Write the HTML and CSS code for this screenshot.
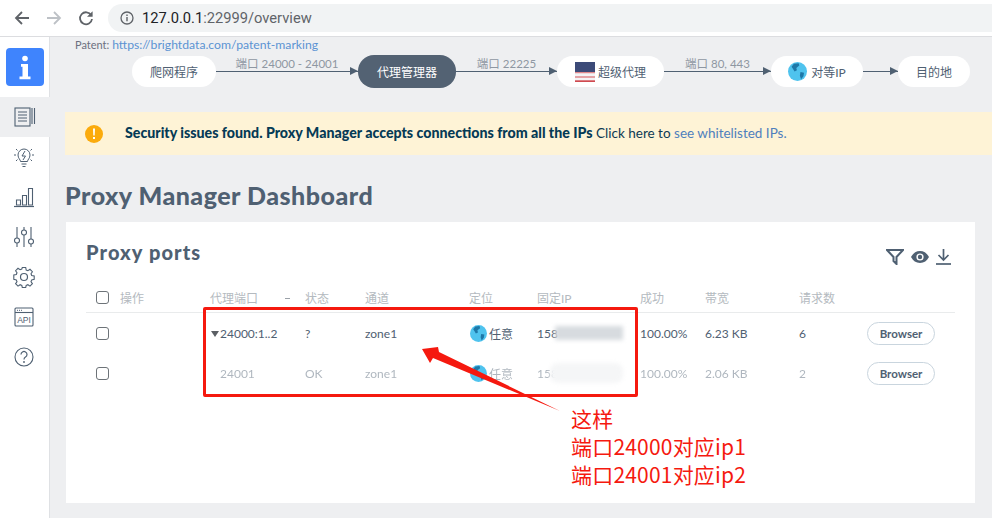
FILE: index.html
```html
<!DOCTYPE html>
<html lang="zh">
<head>
<meta charset="utf-8">
<title>Proxy Manager</title>
<link rel="stylesheet" href="styles.css">
</head>
<body>
<header class="topbar">
  <svg class="nav-icon" viewBox="0 0 16 16"><path d="M15 8H2.500M8 2 2 8l6 6" fill="none" stroke="#5f6368" stroke-width="1.800"/></svg>
  <svg class="nav-icon" viewBox="0 0 16 16"><path d="M1 8h12.500M8 2l6 6-6 6" fill="none" stroke="#bdc1c6" stroke-width="1.800"/></svg>
  <svg class="nav-icon" viewBox="0 0 16 16"><path d="M13.200 5.200A6 6 0 1 0 14 9" fill="none" stroke="#5f6368" stroke-width="1.800"/><path d="M14.600 1.200v5.600H9z" fill="#5f6368"/></svg>
  <div class="url">
    <svg class="info" viewBox="0 0 14 14"><circle cx="7" cy="7" r="6" fill="none" stroke="#5f6368" stroke-width="1.300"/><path d="M6.300 6h1.400v4.200H6.300zM6.300 3.600h1.400V5H6.300z" fill="#5f6368"/></svg>
    <span class="host">127.0.0.1</span><span class="path">:22999/overview</span>
  </div>
</header>
<div class="app">
  <nav class="sidebar">
    <div class="logo-wrap">
      <div class="logo">
        <svg viewBox="0 0 38 38"><circle cx="19" cy="10.500" r="2.800" fill="#fff"/><path d="M15 16h7v12.500h2.500v2.700H13.500v-2.700H16.500v-9.800H15z" fill="#fff"/></svg>
      </div>
    </div>
    <a class="side-item active">
      <svg viewBox="0 0 22 22"><rect x="1" y="2" width="15" height="18" fill="none" stroke="#4f6072" stroke-width="1.100"/><path d="M4 6h9M4 9h9M4 12h9M4 15h9M18 2v16M20.500 2v16" stroke="#4f6072" stroke-width="1.100" fill="none"/></svg>
    </a>
    <a class="side-item">
      <svg viewBox="0 0 22 22"><path d="M7.500 15.500c0-2-2.500-3-2.500-6.500a6 6 0 0 1 12 0c0 3.500-2.500 4.500-2.500 6.500zM8.500 18h5M9.500 20.500h3" fill="none" stroke="#4f6072" stroke-width="1"/><path d="M12 5 9 10h3.500L10 14" fill="none" stroke="#4f6072" stroke-width="1"/><path d="M1 9h2M19 9h2M3 3l1.500 1.500M19 3l-1.500 1.500M3 15l1.500-1.500M19 15l-1.500-1.500" stroke="#4f6072" stroke-width="1"/></svg>
    </a>
    <a class="side-item">
      <svg viewBox="0 0 22 22"><path d="M1 20.500h20" stroke="#4f6072" stroke-width="1.200"/><path d="M3.500 14h4v5h-4zM9.500 9.500h4V19h-4zM15.500 2.500h4V19h-4z" fill="none" stroke="#4f6072" stroke-width="1.100"/></svg>
    </a>
    <a class="side-item">
      <svg viewBox="0 0 22 22"><path d="M4 1v11M4 17v4M11 1v3M11 9v12M18 1v12M18 18v3" stroke="#4f6072" stroke-width="1.100"/><circle cx="4" cy="14.500" r="2.500" fill="none" stroke="#4f6072" stroke-width="1.100"/><circle cx="11" cy="6.500" r="2.500" fill="none" stroke="#4f6072" stroke-width="1.100"/><circle cx="18" cy="15.500" r="2.500" fill="none" stroke="#4f6072" stroke-width="1.100"/></svg>
    </a>
    <a class="side-item">
      <svg viewBox="0 0 22 22"><path d="M9.300 1.500h3.400l.5 2.500 1.700.7 2.100-1.400 2.400 2.400-1.400 2.100.7 1.700 2.500.5v3.400l-2.500.5-.7 1.700 1.400 2.100-2.400 2.400-2.100-1.400-1.700.7-.5 2.100H9.300l-.5-2.100-1.700-.7-2.100 1.400-2.400-2.400 1.400-2.100-.7-1.700-2.500-.5V9l2.500-.5.7-1.700-1.400-2.100 2.400-2.400 2.100 1.400 1.700-.7z" fill="none" stroke="#4f6072" stroke-width="1.100"/><circle cx="11" cy="11" r="3.500" fill="none" stroke="#4f6072" stroke-width="1.200"/></svg>
    </a>
    <a class="side-item">
      <svg viewBox="0 0 22 22"><rect x="2" y="2" width="18" height="18" rx="1" fill="none" stroke="#4f6072" stroke-width="1.100"/><path d="M2 6.500h18" stroke="#4f6072" stroke-width="1.100"/><path d="M4 4.300h1M6 4.300h1M8 4.300h1" stroke="#4f6072" stroke-width="1"/><text x="11" y="16.800" class="api-text" text-anchor="middle">API</text></svg>
    </a>
    <a class="side-item">
      <svg viewBox="0 0 22 22"><circle cx="11" cy="11" r="9" fill="none" stroke="#4f6072" stroke-width="1.100"/><path d="M8 8.500a3 3 0 1 1 4.500 2.600c-1 .6-1.500 1.100-1.500 2.400" fill="none" stroke="#4f6072" stroke-width="1.200"/><circle cx="11" cy="16" r=".9" fill="#4f6072"/></svg>
    </a>
  </nav>
  <main class="main">
    <p class="patent">Patent: <a class="patent-link">https://brightdata.com/patent-marking</a></p>
    <div class="flow">
      <span class="node n1">爬网程序</span>
      <div class="edge e1"><span class="edge-label">端口 24000 - 24001</span></div>
      <span class="node n2">代理管理器</span>
      <div class="edge e2"><span class="edge-label">端口 22225</span></div>
      <span class="node n3">
        <svg class="flag" viewBox="0 0 20 20"><rect width="20" height="20" fill="#f3f3f5"/><path d="M0 1.500h20M0 6h20M0 10.500h20M0 15h20M0 19h20" stroke="#e0888c" stroke-width="1.400"/><path d="M0 19.300h20" stroke="#cf4a50" stroke-width="1.400"/><rect width="20" height="10" fill="#3c4a78"/></svg>
        超级代理</span>
      <div class="edge e3"><span class="edge-label">端口 80, 443</span></div>
      <span class="node n4">
        <svg class="globe" viewBox="0 0 16 16"><circle cx="8" cy="8" r="8" fill="#4fc3ee"/><path d="M5 1.500 9 1 9.500 3 7 5 7.500 7 5.500 8 4 5.500 3 4zM10.500 8.500l3 .5-.5 3-2 2.500-1-3z" fill="#1e78a8"/></svg>
        对等IP</span>
      <div class="edge e4"></div>
      <span class="node n5">目的地</span>
    </div>
    <div class="banner">
      <svg class="warn" viewBox="0 0 18 18"><circle cx="9" cy="9" r="9" fill="#fbab0c"/><path d="M8 3.500h2l-.3 7H8.300zM8 12h2v2H8z" fill="#fff"/></svg>
      <p class="banner-text"><b>Security issues found. Proxy Manager accepts connections from all the IPs</b> Click here to <a class="banner-link">see whitelisted IPs.</a></p>
    </div>
    <h1 class="title">Proxy Manager Dashboard</h1>
    <section class="card">
      <div class="card-head">
        <h2 class="card-title">Proxy ports</h2>
        <div class="tools">
          <svg class="tool t-filter" viewBox="0 0 18 16"><path d="M1 1h16l-6.500 7v7l-3-3V8z" fill="none" stroke="#4f6072" stroke-width="2"/></svg>
          <svg class="tool t-eye" viewBox="0 0 18 12"><path d="M0 6c2-3.800 5-6 9-6s7 2.200 9 6c-2 3.800-5 6-9 6S2 9.800 0 6z" fill="#4f6072"/><circle cx="9" cy="6" r="3.600" fill="#fff"/><circle cx="9" cy="6" r="2.200" fill="#4f6072"/></svg>
          <svg class="tool t-down" viewBox="0 0 15 16"><path d="M7.500 0v10M2.500 6l5 5 5-5" fill="none" stroke="#4f6072" stroke-width="1.700"/><path d="M0 15h15" stroke="#4f6072" stroke-width="1.700"/></svg>
        </div>
      </div>
      <div class="table">
        <div class="row head">
          <span class="cell"><i class="check"></i></span>
          <span class="cell">操作</span>
          <span class="cell sort">代理端口<i class="sort-mark"></i></span>
          <span class="cell">状态</span>
          <span class="cell">通道</span>
          <span class="cell">定位</span>
          <span class="cell">固定IP</span>
          <span class="cell">成功</span>
          <span class="cell">帯宽</span>
          <span class="cell">请求数</span>
          <span class="cell"></span>
        </div>
        <div class="row">
          <span class="cell"><i class="check"></i></span>
          <span class="cell"></span>
          <span class="cell port"><i class="caret"></i>24000:1..2</span>
          <span class="cell">?</span>
          <span class="cell">zone1</span>
          <span class="cell loc"><svg class="globe" viewBox="0 0 16 16"><circle cx="8" cy="8" r="8" fill="#4fc3ee"/><path d="M5 1.500 9 1 9.500 3 7 5 7.500 7 5.500 8 4 5.500 3 4zM10.500 8.500l3 .5-.5 3-2 2.500-1-3z" fill="#1e78a8"/></svg>任意</span>
          <span class="cell ip">158<i class="blur blur-dark"></i></span>
          <span class="cell">100.00%</span>
          <span class="cell">6.23 KB</span>
          <span class="cell">6</span>
          <span class="cell"><button class="browser">Browser</button></span>
        </div>
        <div class="row dim">
          <span class="cell"><i class="check"></i></span>
          <span class="cell"></span>
          <span class="cell port sub"><span class="fade">24001</span></span>
          <span class="cell"><span class="fade">OK</span></span>
          <span class="cell"><span class="fade">zone1</span></span>
          <span class="cell loc"><svg class="globe" viewBox="0 0 16 16"><circle cx="8" cy="8" r="8" fill="#4fc3ee"/><path d="M5 1.500 9 1 9.500 3 7 5 7.500 7 5.500 8 4 5.500 3 4zM10.500 8.500l3 .5-.5 3-2 2.500-1-3z" fill="#1e78a8"/></svg><span class="fade">任意</span></span>
          <span class="cell ip"><span class="fade">158</span><i class="blur blur-light"></i></span>
          <span class="cell"><span class="fade">100.00%</span></span>
          <span class="cell"><span class="fade">2.06 KB</span></span>
          <span class="cell"><span class="fade">2</span></span>
          <span class="cell"><button class="browser">Browser</button></span>
        </div>
      </div>
    </section>
  </main>
</div>
<div class="red-box"></div>
<svg class="red-arrow" viewBox="0 0 150 75"><path d="M2 2 18 0 19 5 140 64 13 11 10 16z" fill="#f5190f"/></svg>
<div class="note">这样<br>端口24000对应ip1<br>端口24001对应ip2</div>
</body>
</html>
```
FILE: styles.css
```css
* { box-sizing: border-box; }
html, body { margin: 0; height: 518px; overflow: hidden; }
body {
  position: relative;
  background: #fff;
  font-family: Lato, "Noto Sans CJK SC", sans-serif;
  color: #4f6072;
}
p, h1, h2 { margin: 0; }

.topbar {
  height: 37px;
  display: flex;
  align-items: center;
  padding-left: 14px;
  background: #fff;
  border-bottom: 1px solid #dcdde0;
}
.nav-icon { width: 16px; height: 16px; margin-right: 16px; flex: none; }
.nav-icon:nth-child(3) { margin-right: 14px; }
.url {
  flex: 1;
  height: 28px;
  display: flex;
  align-items: center;
  padding-left: 12px;
  border-radius: 14px 0 0 14px;
  background: #f1f3f4;
  font: 14.700px Roboto, sans-serif;
}
.info { width: 14px; height: 14px; margin-right: 8px; }
.host { color: #202124; }
.path { color: #5f6368; }

.app { display: flex; height: 481px; }
.sidebar {
  width: 50px;
  flex: none;
  background: #fff;
  border-right: 1px solid #dfe1e4;
}
.logo-wrap { height: 60px; padding: 11px 0 0 6px; }
.logo { width: 38px; height: 38px; border-radius: 4px; background: #3f84fd; }
.logo svg { display: block; width: 38px; height: 38px; }
.side-item { height: 40px; display: flex; align-items: center; justify-content: center; padding-right: 1px; }
.side-item svg { width: 22px; height: 22px; }
.side-item.active { background: #eeeff1; margin-right: -1px; }
.api-text { font: 8.500px "Liberation Sans", sans-serif; fill: #4f6072; }

.main { flex: 1; min-width: 0; background: #eeeff1; padding-left: 15px; }
.patent { height: 16px; padding: 0 0 0 10px; font-size: 11px; line-height: 15px; color: #6c6f80; }
.patent-link { color: #5b93d3; font-size: 12.200px; }

.flow { display: flex; align-items: center; height: 36px; margin: 0 0 0 67px; padding-top: 1px; }
.node {
  height: 31px;
  flex: none;
  display: flex;
  align-items: center;
  justify-content: center;
  gap: 3px;
  border-radius: 16px;
  background: #fff;
  font-size: 12px;
  color: #4f6072;
}
.n1 { width: 84px; }
.n2 { width: 98px; height: 33px; background: #536273; color: #fff; }
.n3 { width: 107px; }
.n4 { width: 92px; gap: 4px; }
.n5 { width: 72px; }
.flag { width: 20px; height: 20px; }
.globe { width: 19px; height: 19px; flex: none; }
.edge { position: relative; flex: none; height: 1px; background: #4f6072; }
.edge::after {
  content: "";
  position: absolute;
  right: 0;
  top: -4px;
  border-left: 8px solid #4f6072;
  border-top: 4.500px solid transparent;
  border-bottom: 4.500px solid transparent;
}
.e1 { width: 142px; }
.e2 { width: 101px; }
.e3 { width: 107px; }
.e4 { width: 35px; }
.edge-label {
  position: absolute;
  left: 0;
  right: 0;
  bottom: 0;
  text-align: center;
  font-size: 11.500px;
  line-height: 16px;
  color: #8e97a2;
  white-space: nowrap;
}

.banner {
  height: 43px;
  margin-top: 23px;
  display: flex;
  align-items: center;
  padding-left: 20px;
  background: #fef3d6;
}
.warn { width: 18px; height: 18px; margin-right: 22px; flex: none; }
.banner-text { font-size: 13.500px; line-height: 16px; padding-bottom: 2px; color: #0d3a53; white-space: nowrap; }
.banner-text b { font-size: 14.200px; font-weight: 900; color: #053a55; }
.banner-link { color: #4f80bd; }

.title { margin-top: 25px; font-size: 25px; line-height: 30px; font-weight: 900; color: #4f6072; letter-spacing: .5px; }
.card {
  width: 909px;
  height: 281px;
  margin: 12px 0 0 1px;
  padding: 0 20px;
  background: #fff;
}
.card-head { position: relative; height: 63px; padding-top: 19px; }
.card-title { font-size: 20px; line-height: 22px; font-weight: 900; color: #4f6072; letter-spacing: 1.100px; }
.tools { position: absolute; left: 800px; top: 27px; display: flex; align-items: center; }
.tool { display: block; flex: none; }
.t-filter { width: 18px; height: 16px; margin-right: 7px; }
.t-eye { width: 18px; height: 12px; margin-right: 7px; }
.t-down { width: 15px; height: 16px; }

.table { width: 869px; font-size: 12px; }
.row {
  display: grid;
  grid-template-columns: 34px 90px 95px 60px 104px 68px 103px 65px 94px 68px 88px;
  align-items: center;
  height: 40px;
  color: #4f6072;
}
.row.head { height: 28px; border-bottom: 1px solid #e9ebec; color: #b4bac0; padding-bottom: 3px; }
.fade { opacity: .45; }
.cell { display: flex; align-items: center; white-space: nowrap; position: relative; min-width: 0; }
.check {
  display: block;
  width: 13px;
  height: 13px;
  margin-left: 10px;
  border: 1px solid #6d7378;
  border-radius: 3px;
  background: #fff;
}
.sort-mark { position: absolute; left: 75px; top: 9px; width: 5px; height: 1px; background: #9aa1a8; }
.port { padding-left: 1px; }
.port.sub { padding-left: 10px; }
.caret {
  width: 0; height: 0;
  margin: 2px 1px 0 0;
  border-top: 6px solid #5b5f64;
  border-left: 4px solid transparent;
  border-right: 4px solid transparent;
}
.loc { gap: 2px; }
.loc .globe { width: 17px; height: 17px; margin-left: 1px; }
.blur { position: absolute; filter: blur(2px); }
.blur-dark { top: 0; left: 18px; width: 68px; height: 14px; background: #d7dbdf; }
.blur-light { top: -3px; left: 13px; width: 73px; height: 20px; background: #f5f6f7; border-radius: 8px; }
.browser {
  width: 68px;
  height: 23px;
  padding: 0;
  border: 1px solid #c9d5de;
  border-radius: 12px;
  background: #fff;
  font: 700 11.500px Lato, sans-serif;
  color: #4f6072;
}

.red-box {
  position: absolute;
  left: 203px;
  top: 307px;
  width: 435px;
  height: 90px;
  border: 3px solid #f5190f;
  border-radius: 2px;
}
.red-arrow { position: absolute; left: 420px; top: 347px; width: 150px; height: 75px; }
.note {
  position: absolute;
  left: 571px;
  top: 404px;
  font: 21px/28px "Noto Sans CJK SC", "Liberation Sans", sans-serif;
  letter-spacing: .2px;
  color: #f5190f;
  white-space: nowrap;
}
```
